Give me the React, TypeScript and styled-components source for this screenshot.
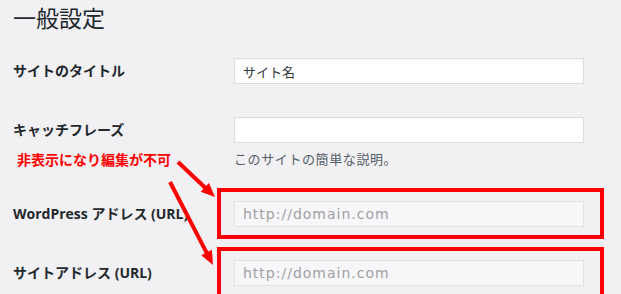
import React from 'react';
import styled, { createGlobalStyle } from 'styled-components';

const GlobalStyle = createGlobalStyle`
  html, body {
    margin: 0;
    padding: 0;
    background: #f1f0f3;
  }
  body {
    font-family: "Open Sans", "Noto Sans CJK JP", sans-serif;
    color: #23282d;
  }
`;

const Page = styled.div`
  position: relative;
  width: 621px;
  height: 294px;
  overflow: hidden;
  padding-left: 13px;
  box-sizing: border-box;
`;

const Title = styled.h1`
  margin: 0;
  padding-top: 2px;
  font-family: "Noto Sans CJK JP", sans-serif;
  font-size: 23px;
  font-weight: 400;
  line-height: 30px;
  height: 39px;
  color: #23282d;
`;

const Form = styled.div`
  display: flex;
  flex-direction: column;
`;

const Row = styled.div`
  display: grid;
  grid-template-columns: 221px 350px;
  padding: 17px 0 16px;
`;

const LabelCell = styled.div`
  display: flex;
  flex-direction: column;
`;

const Label = styled.label`
  font-family: "Open Sans", "Noto Sans CJK JP", sans-serif;
  font-size: 14px;
  font-weight: 700;
  line-height: 26px;
  color: #23282d;
`;

const Note = styled.span`
  margin: 7px 0 0 4px;
  font-family: "Noto Sans CJK JP", sans-serif;
  font-size: 14px;
  font-weight: 700;
  line-height: 18px;
  color: #ff0000;
`;

const FieldCell = styled.div<{ $marked?: boolean }>`
  position: relative;
  display: flex;
  flex-direction: column;

  ${(p) =>
    p.$marked &&
    `
    &::before {
      content: '';
      position: absolute;
      top: -13px;
      left: -17px;
      right: -20px;
      bottom: -12px;
      border: 4px solid #ff0000;
      pointer-events: none;
    }
  `}
`;

const Input = styled.input`
  box-sizing: border-box;
  width: 350px;
  height: 26px;
  margin: 0;
  padding: 0 8px;
  border: 1px solid #dddddd;
  background: #ffffff;
  box-shadow: inset 0 1px 2px rgba(0, 0, 0, 0.04);
  font-family: "Noto Sans CJK JP", sans-serif;
  font-size: 13px;
  color: #32373c;
  outline: none;

  &:disabled {
    background: #f7f6f9;
    border-color: #e3e2e5;
    box-shadow: none;
    color: #a0a0a2;
    font-family: "DejaVu Sans", sans-serif;
    font-size: 14px;
    letter-spacing: 1px;
  }
`;

const Description = styled.p`
  margin: 6px 0 0;
  font-family: "Noto Sans CJK JP", sans-serif;
  font-size: 13px;
  letter-spacing: 0.6px;
  line-height: 19px;
  color: #555d66;
`;

const Arrows = styled.svg`
  position: absolute;
  left: 0;
  top: 0;
  pointer-events: none;
`;

const Arrow = ({ x1, y1, x2, y2 }: { x1: number; y1: number; x2: number; y2: number }) => {
  const dx = x2 - x1;
  const dy = y2 - y1;
  const len = Math.hypot(dx, dy);
  const ux = dx / len;
  const uy = dy / len;
  const head = 14;
  const half = 6;
  const bx = x2 - ux * head;
  const by = y2 - uy * head;
  const pts = `${x2},${y2} ${bx - uy * half},${by + ux * half} ${bx + uy * half},${by - ux * half}`;
  return (
    <g>
      <line x1={x1} y1={y1} x2={bx + ux * 2} y2={by + uy * 2} stroke="#ff0000" strokeWidth={4} />
      <polygon points={pts} fill="#ff0000" />
    </g>
  );
};

export default function App() {
  return (
    <>
      <GlobalStyle />
      <Page>
        <Title>一般設定</Title>
        <Form>
          <Row>
            <LabelCell>
              <Label>サイトのタイトル</Label>
            </LabelCell>
            <FieldCell>
              <Input defaultValue="サイト名" />
            </FieldCell>
          </Row>
          <Row>
            <LabelCell>
              <Label>キャッチフレーズ</Label>
              <Note>非表示になり編集が不可</Note>
            </LabelCell>
            <FieldCell>
              <Input defaultValue="" />
              <Description>このサイトの簡単な説明。</Description>
            </FieldCell>
          </Row>
          <Row>
            <LabelCell>
              <Label>WordPress アドレス (URL)</Label>
            </LabelCell>
            <FieldCell $marked>
              <Input disabled defaultValue="http://domain.com" />
            </FieldCell>
          </Row>
          <Row>
            <LabelCell>
              <Label>サイトアドレス (URL)</Label>
            </LabelCell>
            <FieldCell $marked>
              <Input disabled defaultValue="http://domain.com" />
            </FieldCell>
          </Row>
        </Form>
        <Arrows width={621} height={294} viewBox="0 0 621 294">
          <Arrow x1={178} y1={162} x2={215} y2={197} />
          <Arrow x1={170} y1={182} x2={213} y2={265} />
        </Arrows>
      </Page>
    </>
  );
}
